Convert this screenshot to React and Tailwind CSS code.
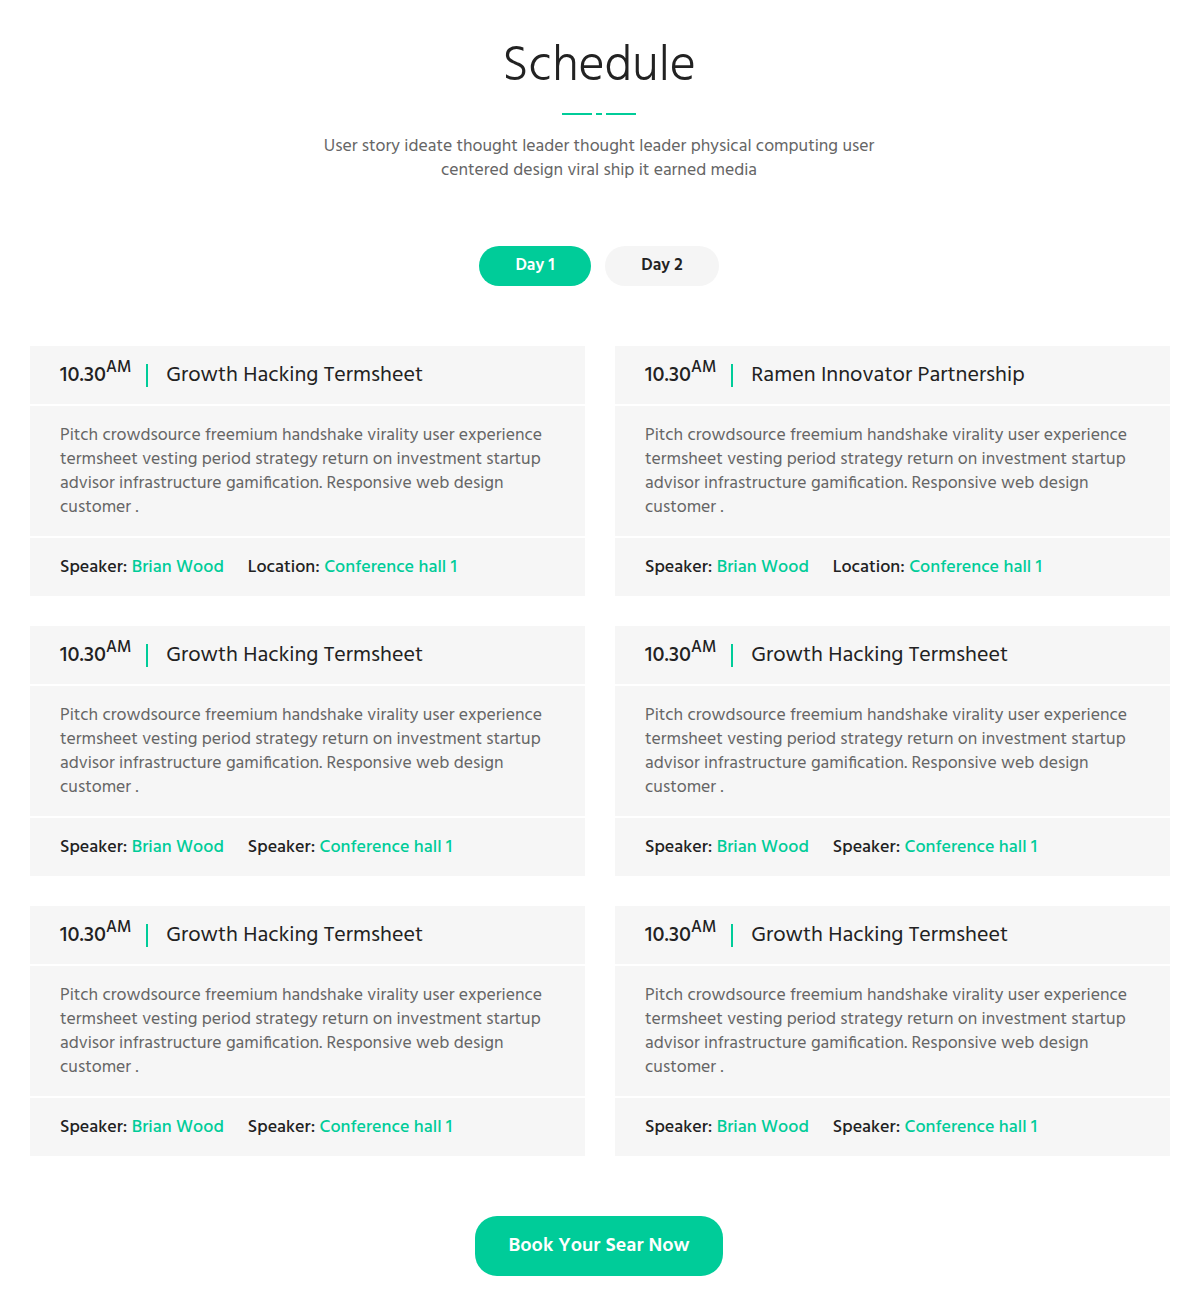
import React, { useState } from "react";

const sessions = [
  { time: "10.30", title: "Growth Hacking Termsheet", label2: "Location" },
  { time: "10.30", title: "Ramen Innovator Partnership", label2: "Location" },
  { time: "10.30", title: "Growth Hacking Termsheet", label2: "Speaker" },
  { time: "10.30", title: "Growth Hacking Termsheet", label2: "Speaker" },
  { time: "10.30", title: "Growth Hacking Termsheet", label2: "Speaker" },
  { time: "10.30", title: "Growth Hacking Termsheet", label2: "Speaker" },
];

const desc =
  "Pitch crowdsource freemium handshake virality user experience termsheet vesting period strategy return on investment startup advisor infrastructure gamification. Responsive web design customer .";

function SessionCard({ s }) {
  return (
    <div className="flex flex-col gap-[2px] bg-white">
      <div className="h-[58px] bg-[#f6f6f6] flex items-center pl-[30px] pr-6">
        <span className="text-[22px] font-medium text-[#222] mt-[1px]">
          {s.time}
          <sup className="text-[16.5px] relative -top-[9px]">AM</sup>
        </span>
        <span className="w-[2px] h-[23px] bg-[#00cc99] ml-[15px] mr-[18px]" />
        <span className="text-[22px] text-[#222] mt-[1px]">{s.title}</span>
      </div>
      <div className="h-[130px] bg-[#f6f6f6] px-[30px] pt-[18px] text-[17.7px] leading-[24px] text-[#666]">
        {desc}
      </div>
      <div className="h-[58px] bg-[#f6f6f6] flex items-center px-[30px] text-[18px] font-medium text-[#222]">
        <span>
          Speaker: <span className="text-[#00cc99]">Brian Wood</span>
        </span>
        <span className="ml-6">
          {s.label2}: <span className="text-[#00cc99]">Conference hall 1</span>
        </span>
      </div>
    </div>
  );
}

export default function App() {
  const [day, setDay] = useState(1);

  return (
    <div className="bg-white min-h-[1292px] font-['Hind','Open_Sans',sans-serif] pt-[39px]">
      <div className="flex flex-col items-center">
        <h1 className="text-[50px] leading-[56px] font-light text-[#222]">Schedule</h1>
        <div className="flex items-center gap-[4px] mt-[18px]">
          <span className="w-[30px] h-[2px] bg-[#00cc99]" />
          <span className="w-[6px] h-[2px] bg-[#00cc99]" />
          <span className="w-[30px] h-[2px] bg-[#00cc99]" />
        </div>
        <p className="mt-[20px] w-[580px] text-center text-[17.7px] leading-[24px] text-[#666]">
          User story ideate thought leader thought leader physical computing user centered design viral ship it earned media
        </p>

        <div className="flex gap-[14px] mt-[63px]">
          {[1, 2].map((d) => (
            <button
              key={d}
              onClick={() => setDay(d)}
              className={
                day === d
                  ? "w-[112px] h-[40px] rounded-full bg-[#00cc99] text-white text-[17px] font-semibold"
                  : "w-[114px] h-[40px] rounded-full bg-[#f5f5f5] text-[#222] text-[17px] font-semibold"
              }
            >
              Day {d}
            </button>
          ))}
        </div>
      </div>

      <div className="grid grid-cols-2 gap-x-[30px] gap-y-[30px] px-[30px] mt-[60px] w-[1200px]">
        {sessions.map((s, i) => (
          <SessionCard key={i} s={s} />
        ))}
      </div>

      <div className="flex justify-center mt-[60px]">
        <button className="w-[248px] h-[60px] rounded-[22px] bg-[#00cc99] text-white text-[20px] font-semibold">
          Book Your Sear Now
        </button>
      </div>
    </div>
  );
}
